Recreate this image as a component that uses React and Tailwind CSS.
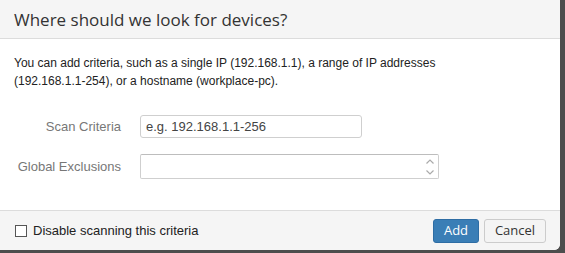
export default function App() {
  return (
    <div className="w-[565px] h-[253px] bg-[#4d4d4d] overflow-hidden">
      <div className="w-[560px] h-[250px] bg-white rounded-br-[6px] flex flex-col overflow-hidden">
        <div className="h-[39px] bg-[#f5f5f5] border-b border-[#dcdcdc] flex items-center pl-[14px] shrink-0">
          <span className="text-[17px] text-[#333] font-['Open_Sans',sans-serif] leading-none">Where should we look for devices?</span>
        </div>
        <div className="flex-1 flex flex-col font-['Liberation_Sans',Arial,sans-serif]">
          <p className="pl-[14px] pt-[15px] text-[12px] leading-[18px] text-[#222]">
            You can add criteria, such as a single IP (192.168.1.1), a range of IP addresses<br />
            (192.168.1.1-254), or a hostname (workplace-pc).
          </p>
          <div className="mt-[25px] flex items-center">
            <div className="w-[121px] text-right text-[13px] text-[#777]">Scan Criteria</div>
            <div className="ml-[19px] w-[222px] h-[23px] border border-[#cfcfcf] rounded-[3px] flex items-center pl-[5px] text-[13px] text-[#444]">e.g. 192.168.1.1-256</div>
          </div>
          <div className="mt-[16px] flex items-center">
            <div className="w-[121px] text-right text-[13px] text-[#777]">Global Exclusions</div>
            <div className="ml-[19px] w-[299px] h-[25px] border border-[#cfcfcf] border-t-[#bdbdbd] rounded-[2px] flex justify-end items-center pr-[2px]">
              <svg width="12" height="22" viewBox="0 0 12 22" className="text-[#aaa]">
                <path d="M2.5 7.5 L6 4 L9.5 7.5" fill="none" stroke="currentColor" strokeWidth="1.2" />
                <path d="M2.5 14.5 L6 18 L9.5 14.5" fill="none" stroke="currentColor" strokeWidth="1.2" />
              </svg>
            </div>
          </div>
        </div>
        <div className="h-[40px] bg-[#f5f5f5] border-t border-[#dcdcdc] flex items-center shrink-0 pl-[15px] pr-[14px]">
          <div className="w-[12px] h-[12px] border border-[#555] bg-white"></div>
          <span className="ml-[6px] text-[13px] text-[#222] font-['Liberation_Sans',Arial,sans-serif]">Disable scanning this criteria</span>
          <div className="ml-auto flex gap-[5px]">
            <button className="w-[46px] h-[24px] rounded-[3px] bg-[#3a7eb6] border border-[#2e6da4] text-white text-[13px] font-['Open_Sans',sans-serif]">Add</button>
            <button className="w-[62px] h-[24px] rounded-[3px] bg-[#f4f4f4] border border-[#ccc] text-[#333] text-[13px] font-['Open_Sans',sans-serif]">Cancel</button>
          </div>
        </div>
      </div>
    </div>
  );
}
